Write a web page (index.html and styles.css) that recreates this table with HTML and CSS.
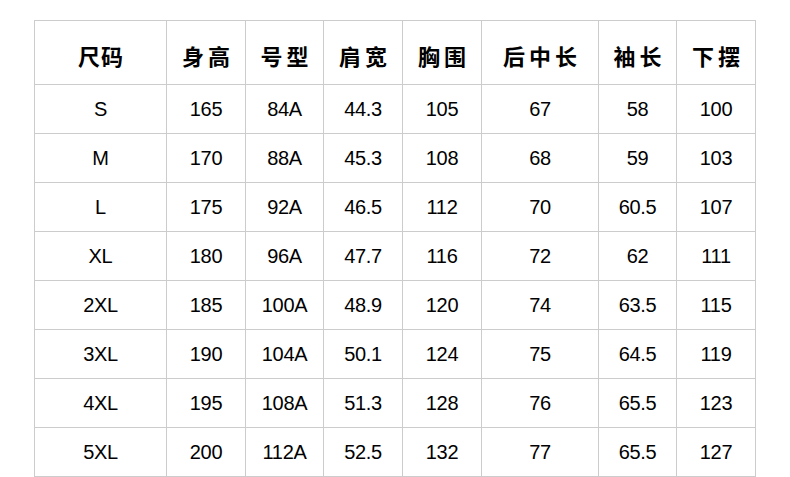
FILE: index.html
```html
<!DOCTYPE html>
<html lang="zh">
<head>
<meta charset="utf-8">
<title>尺码表</title>
<link rel="stylesheet" href="styles.css">
</head>
<body>
<table class="size-table">
  <colgroup>
    <col class="c1"><col class="c2"><col class="c3"><col class="c4"><col class="c5"><col class="c6"><col class="c7"><col class="c8">
  </colgroup>
  <thead>
    <tr>
      <th class="tight">尺码</th><th>身高</th><th>号型</th><th>肩宽</th><th>胸围</th><th>后中长</th><th>袖长</th><th>下摆</th>
    </tr>
  </thead>
  <tbody>
    <tr><td>S</td><td>165</td><td>84A</td><td>44.3</td><td>105</td><td>67</td><td>58</td><td>100</td></tr>
    <tr><td>M</td><td>170</td><td>88A</td><td>45.3</td><td>108</td><td>68</td><td>59</td><td>103</td></tr>
    <tr><td>L</td><td>175</td><td>92A</td><td>46.5</td><td>112</td><td>70</td><td>60.5</td><td>107</td></tr>
    <tr><td>XL</td><td>180</td><td>96A</td><td>47.7</td><td>116</td><td>72</td><td>62</td><td>111</td></tr>
    <tr><td>2XL</td><td>185</td><td>100A</td><td>48.9</td><td>120</td><td>74</td><td>63.5</td><td>115</td></tr>
    <tr><td>3XL</td><td>190</td><td>104A</td><td>50.1</td><td>124</td><td>75</td><td>64.5</td><td>119</td></tr>
    <tr><td>4XL</td><td>195</td><td>108A</td><td>51.3</td><td>128</td><td>76</td><td>65.5</td><td>123</td></tr>
    <tr><td>5XL</td><td>200</td><td>112A</td><td>52.5</td><td>132</td><td>77</td><td>65.5</td><td>127</td></tr>
  </tbody>
</table>
</body>
</html>
```
FILE: styles.css
```css
html, body {
  margin: 0;
  padding: 0;
  background: #fff;
}
body {
  padding: 20px 0 0 34px;
}
.size-table {
  border-collapse: collapse;
  table-layout: fixed;
  width: 722px;
  color: #000;
  font-family: "Liberation Sans", "Noto Sans CJK SC", sans-serif;
}
.c1 { width: 132px; }
.c2 { width: 79px; }
.c3 { width: 78px; }
.c4 { width: 79px; }
.c5 { width: 79px; }
.c6 { width: 117px; }
.c7 { width: 78px; }
.c8 { width: 79px; }
.size-table th,
.size-table td {
  border: 1px solid #cccccc;
  text-align: center;
  padding: 0;
}
.size-table th {
  height: 64px;
  font-family: "Noto Sans CJK SC", sans-serif;
  font-weight: 700;
  font-size: 22px;
  letter-spacing: 4px;
  text-indent: 4px;
  padding-top: 5px;
  box-sizing: border-box;
}
.size-table th.tight {
  letter-spacing: 1px;
  text-indent: 1px;
}
.size-table td {
  height: 48px;
  font-size: 20px;
  letter-spacing: -0.3px;
}
```
